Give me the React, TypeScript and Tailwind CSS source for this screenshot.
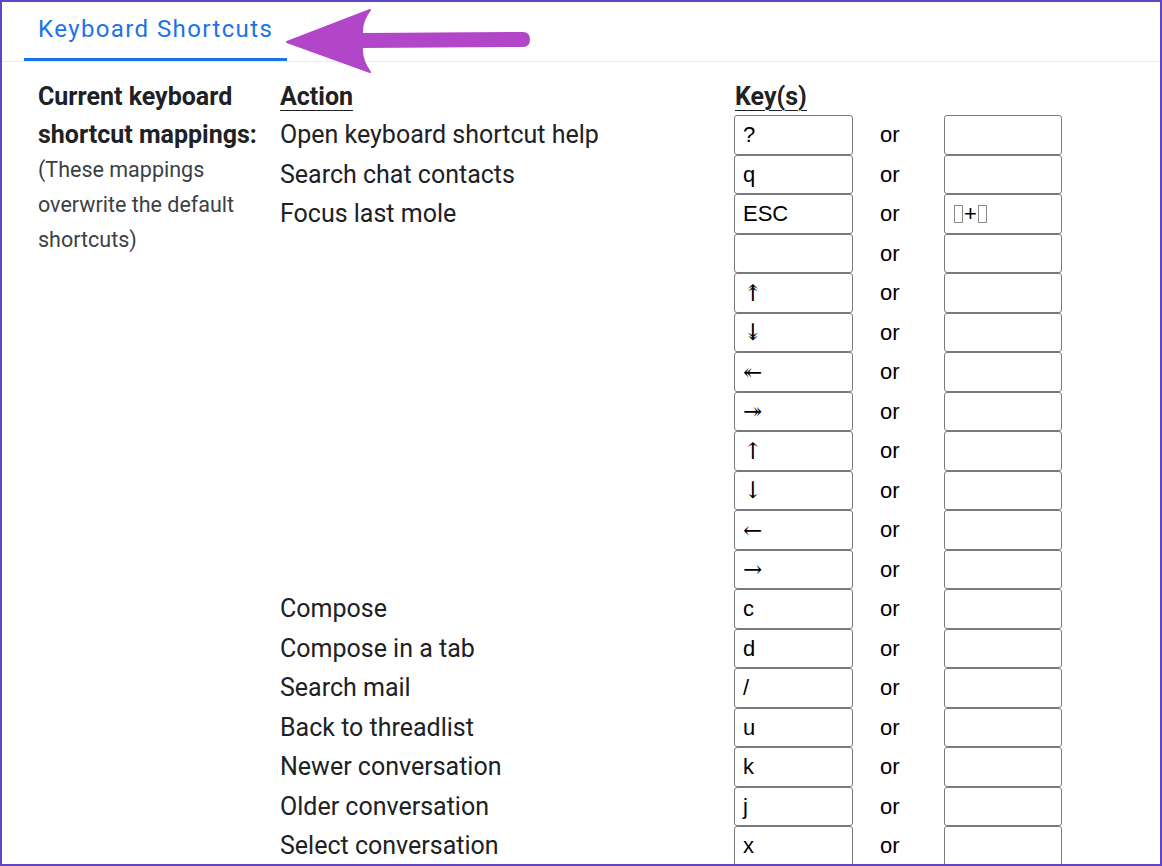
import React from "react";

type Row = { action: string; key1: React.ReactNode; key2?: React.ReactNode };

const Tofu = () => (
  <span className="mx-[1px] inline-block h-[18px] w-[9px] border border-[#8a8a8a]" />
);

// arrow keys are drawn with DejaVu Serif's thin arrow glyphs
const Arrow = ({ glyph }: { glyph: string }) => (
  <span className="text-[23px]" style={{ fontFamily: "'DejaVu Serif', 'DejaVu Sans', serif" }}>
    {glyph}
  </span>
);

const ROWS: Row[] = [
  { action: "Open keyboard shortcut help", key1: "?" },
  { action: "Search chat contacts", key1: "q" },
  {
    action: "Focus last mole",
    key1: "ESC",
    key2: (
      <span className="flex items-center">
        <Tofu />
        <span>+</span>
        <Tofu />
      </span>
    ),
  },
  { action: "", key1: "" },
  { action: "", key1: <Arrow glyph="↟" /> },
  { action: "", key1: <Arrow glyph="↡" /> },
  { action: "", key1: <Arrow glyph="↞" /> },
  { action: "", key1: <Arrow glyph="↠" /> },
  { action: "", key1: <Arrow glyph="↑" /> },
  { action: "", key1: <Arrow glyph="↓" /> },
  { action: "", key1: <Arrow glyph="←" /> },
  { action: "", key1: <Arrow glyph="→" /> },
  { action: "Compose", key1: "c" },
  { action: "Compose in a tab", key1: "d" },
  { action: "Search mail", key1: "/" },
  { action: "Back to threadlist", key1: "u" },
  { action: "Newer conversation", key1: "k" },
  { action: "Older conversation", key1: "j" },
  { action: "Select conversation", key1: "x" },
];

const KeyBox = ({ children, width }: { children?: React.ReactNode; width: string }) => (
  <div
    className={`${width} flex h-[39.5px] items-center overflow-hidden rounded-[3px] border border-[#7a7a7a] pl-[8px] text-[22px] text-black`}
    style={{ fontFamily: "'Liberation Sans', Arial, 'DejaVu Sans', sans-serif" }}
  >
    {children}
  </div>
);

export default function App() {
  return (
    <div
      className="relative h-[866px] w-[1162px] overflow-hidden border-2 border-[#6046c6] bg-white text-[#202124]"
      style={{ fontFamily: "Roboto, 'Noto Sans', sans-serif" }}
    >
      {/* tab strip */}
      <div className="flex h-[60px] border-b border-[#ebebeb] pl-[22px]">
        <div className="flex flex-col justify-end">
          <div className="px-[14px] pb-[14px] text-[24px] leading-[30px] tracking-[1.4px] text-[#1a73e8]">
            Keyboard Shortcuts
          </div>
          <div className="h-[3px] bg-[#1a73e8]" />
        </div>
      </div>

      {/* content */}
      <div className="flex pl-[36px] pt-[16px]">
        <div className="w-[242px] shrink-0">
          <div className="whitespace-nowrap text-[25px] font-bold leading-[38px] text-[#202124]">
            Current keyboard
            <br />
            shortcut mappings:
          </div>
          <div className="mt-[-2px] w-[232px] text-[21.5px] leading-[35px] text-[#3c4043]">
            (These mappings overwrite the default shortcuts)
          </div>
        </div>

        <div className="flex flex-col">
          <div className="flex h-[37px] items-center">
            <div className="w-[454px] text-[25px] font-bold">
              <span className="underline decoration-1 underline-offset-[5px]">Action</span>
            </div>
            <div className="pl-[1px] text-[25px] font-bold">
              <span className="underline decoration-1 underline-offset-[5px]">Key(s)</span>
            </div>
          </div>
          {ROWS.map((row, i) => (
            <div key={i} className="flex h-[39.5px] items-center">
              <div className="w-[454px] text-[25px]">{row.action}</div>
              <KeyBox width="w-[119px]">{row.key1}</KeyBox>
              <div
                className="w-[91px] pl-[27px] text-[22px] text-black"
                style={{ fontFamily: "'Liberation Sans', Arial, sans-serif" }}
              >
                or
              </div>
              <KeyBox width="w-[118px]">{row.key2}</KeyBox>
            </div>
          ))}
        </div>
      </div>

      {/* annotation arrow */}
      <svg
        className="pointer-events-none absolute left-[-2px] top-[-2px]"
        width="1162"
        height="866"
        viewBox="0 0 1162 866"
      >
        <path
          d="M287 42 L370 10 Q361 22 362 34 L523 33 Q529 33 529 39.5 Q529 46 523 46 L362 47 Q361 60 370 72 Z"
          fill="#b246c9"
          stroke="#b246c9"
          strokeWidth="2"
          strokeLinejoin="round"
        />
      </svg>
    </div>
  );
}
